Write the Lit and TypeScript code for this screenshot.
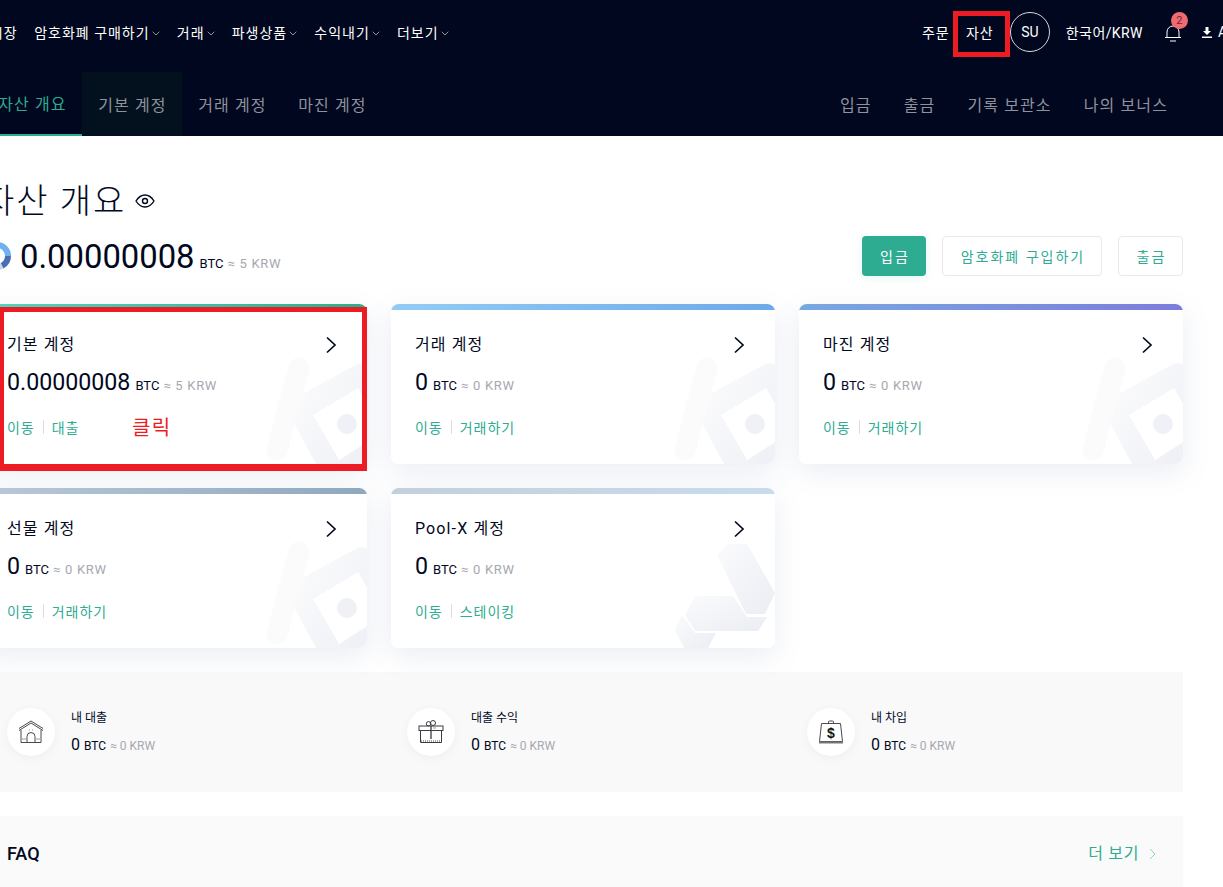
import { LitElement, html, css, svg } from "lit";
import { customElement } from "lit/decorators.js";

const chevDown = html`<svg class="cd" viewBox="0 0 8 5" width="8" height="5"><path d="M.7.7 4 4l3.300-3.300" fill="none" stroke="#8b8e99" stroke-width="1"/></svg>`;
const chevRight = html`<svg class="cr" viewBox="0 0 12 18" width="12" height="18"><path d="M2 1.500 10 9l-8 7.500" fill="none" stroke="#01081e" stroke-width="1.700"/></svg>`;

const kMark = svg`<svg class="wm" viewBox="0 0 384 160" width="384" height="160">
  <defs>
    <linearGradient id="wg" gradientUnits="userSpaceOnUse" x1="305" y1="90" x2="384" y2="140"><stop offset="0" stop-color="#fbfbfc"/><stop offset="1" stop-color="#eff1f6"/></linearGradient>
  </defs>
  <path d="M316 64 294 146" stroke="#fbfbfc" stroke-width="21" stroke-linecap="round" fill="none"/>
  <path d="M321 89 376 59 384 60V160H333L311 119Z" fill="url(#wg)"/>
  <path d="M330 111 375 84 400 128 356 156Z" fill="#fff"/>
  <circle cx="364" cy="120" r="10" fill="#eff1f6"/>
</svg>`;
const poolMark = svg`<svg class="wm" viewBox="0 0 384 160" width="384" height="160">
  <defs><linearGradient id="pg" x1="0" y1="0" x2="1" y2="1"><stop offset="0" stop-color="#fbfbfd"/><stop offset="1" stop-color="#eaedf3"/></linearGradient></defs>
  <path d="M326 67 336 56H356L384 105 374 126H355Z" fill="url(#pg)"/>
  <path d="M294 127 304 108H342L356 129H376L367 143H304Z" fill="url(#pg)"/>
  <path d="M284 142 291 127 304 145H325L317 160H293Z" fill="url(#pg)"/>
</svg>`;

const houseIcon = html`<svg viewBox="0 0 26 24" width="26" height="24" fill="none" stroke="#4a4a4f" stroke-width="1">
  <path d="M1 8.500 13 1 25 8.500"/><path d="M1 10.500 13 3 25 10.500"/><path d="M3 10v12.500h20V10"/>
  <path d="M9 22.500v-6a4 4 0 0 1 8 0v6"/>
  <path d="M11 10h1M14 10h1M4 19h4M18 19h4" stroke="#999"/></svg>`;
const giftIcon = html`<svg viewBox="0 0 26 24" width="26" height="24" fill="none" stroke="#3c3c42" stroke-width="1">
  <rect x="1" y="6" width="24" height="4.500"/><path d="M2.500 10.500V22.500H23.500V10.500"/><path d="M13 6v13" stroke-width="1.300"/>
  <circle cx="10.500" cy="3.800" r="2.200"/><circle cx="15" cy="3" r="2.500"/>
  <path d="M3 21h20" stroke="#888" stroke-dasharray="1 1" stroke-width="1.500"/><path d="M15 8h3" stroke="#999"/></svg>`;
const bagIcon = html`<svg viewBox="0 0 26 25" width="26" height="25" fill="none" stroke="#4a4a4f" stroke-width="1">
  <path d="M10.500 3.500V2a1 1 0 0 1 1-1h3a1 1 0 0 1 1 1v1.500"/><path d="M3.500 3.500h19L24.500 21.500h-23Z"/>
  <path d="M1 22.500h24" stroke="#777" stroke-width="2"/>
  <text x="13" y="17.500" font-family="Liberation Sans" font-size="14" font-weight="700" text-anchor="middle" fill="#111" stroke="none">$</text></svg>`;

const cards = [
  { t: "기본 계정", n: "0.00000008", k: "5", a: "대출", c: "c1", m: kMark },
  { t: "거래 계정", n: "0", k: "0", a: "거래하기", c: "c2", m: kMark },
  { t: "마진 계정", n: "0", k: "0", a: "거래하기", c: "c3", m: kMark },
  { t: "선물 계정", n: "0", k: "0", a: "거래하기", c: "c4", m: kMark },
  { t: "Pool-X 계정", n: "0", k: "0", a: "스테이킹", c: "c5", m: poolMark },
];

@customElement("app-root")
export class AppRoot extends LitElement {
  static styles = css`
    :host { display: block; width: 1223px; height: 887px; overflow: hidden; position: relative; background: #fff;
      font-family: Roboto, "Noto Sans CJK KR", sans-serif; color: #01081e; }
    * { box-sizing: border-box; }
    .ko { letter-spacing: .07em; }
    header { height: 72px; background: #00071e; display: flex; align-items: center; padding-bottom: 8px; color: #fff; font-size: 14px; overflow: hidden; }
    .left { display: flex; align-items: center; margin-left: -10px; flex-shrink: 0; }
    .left .i { display: flex; align-items: center; margin-right: 17.200px; white-space: nowrap; }
    .left .i.first { margin-right: 16.500px; }
    .cd { margin-left: 2px; margin-top: 3px; }
    .right { margin-left: auto; width: 301px; flex-shrink: 0; display: flex; align-items: center; white-space: nowrap; }
    .right .m { margin-right: 16.200px; }
    .right .lang { letter-spacing: .4px; margin-right: 18px; }
    .avatar { width: 40px; height: 40px; flex-shrink: 0; border: 1px solid #d8d9de; border-radius: 50%; display: flex; align-items: center; justify-content: center; margin-right: 16px; font-size: 14px; font-weight: 400; }
    .bell { position: relative; width: 16px; height: 18px; flex-shrink: 0; margin: 2px 21px 0 4px; }
    .badge { position: absolute; left: 6px; top: -12px; width: 17px; height: 17px; border-radius: 50%; background: #ee6b72; color: #7a1e26; font-size: 11px; display: flex; align-items: center; justify-content: center; }
    .dl { display: flex; align-items: center; gap: 6px; }
    .subwrap { height: 64px; background: #00071e; }
    .sub { height: 64px; display: flex; justify-content: space-between; margin-left: -18px; width: 1201px; color: #8f929c; font-size: 16px; }
    .tabs { display: flex; }
    .tab { width: 100px; display: flex; align-items: center; justify-content: center; white-space: nowrap; padding: 0 0 1px 1px; }
    .tab.on { color: #2dac91; border-bottom: 2px solid #2dac91; }
    .tab.hov { background: #03111f; }
    .subr { display: flex; gap: 32px; align-items: center; padding: 0 15px 1px 0; white-space: nowrap; }
    main { margin-left: -17px; width: 1200px; }
    .title { display: flex; align-items: center; height: 40px; margin-top: 45px; font-size: 34px; font-weight: 300; gap: 9px; letter-spacing: 2px; line-height: 40px; white-space: nowrap; }
    .bal { display: flex; align-items: center; justify-content: space-between; margin-top: 15px; height: 40px; }
    .ball { display: flex; align-items: center; gap: 9px; }
    .big { font-size: 32.800px; font-weight: 400; }
    .u { font-size: 13px; margin-left: 5px; letter-spacing: 0; }
    .k { font-size: 13px; color: #a6a8b0; margin-left: 4px; letter-spacing: .7px; }
    .ball .numline { display: flex; align-items: baseline; padding-top: 2px; }
    .btns { display: flex; gap: 16px; }
    .btn { height: 40px; border-radius: 4px; border: 1px solid #e8e9ec; color: #2dac91; font-size: 14px; display: flex; align-items: center; justify-content: center; letter-spacing: 2px; padding-left: 2px; white-space: nowrap; }
    .b1 { width: 64px; background: #2dac91; color: #fff; border: 0; box-shadow: 0 2px 8px rgba(45,172,145,.12); }
    .b2 { width: 160px; }
    .b3 { width: 65px; }
    .grid { display: grid; grid-template-columns: repeat(3, 384px); gap: 24px; margin-top: 28px; }
    .card { height: 160px; border-radius: 8px; background: #fff; position: relative; overflow: hidden; padding: 6px 24px 0; }
    .wrap { border-radius: 8px; box-shadow: 0 8px 28px rgba(95,115,165,.13); }
    .bar { position: absolute; left: 0; right: 0; top: 0; height: 6px; }
    .c1 .bar { background: linear-gradient(90deg, #54d4c0, #2bae8d); }
    .c2 .bar { background: linear-gradient(90deg, #92ccf5, #6ea9e8); }
    .c3 .bar { background: linear-gradient(90deg, #78a8e0, #7c7cdc); }
    .c4 .bar { background: linear-gradient(90deg, #b8c9d8, #8fa8be); }
    .c5 .bar { background: linear-gradient(90deg, #c2d0dc, #c8dcee); }
    .wm { position: absolute; left: 0; top: 0; }
    .ct { position: relative; height: 20px; margin-top: 24px; padding-top: 1px; display: flex; justify-content: space-between; align-items: center; font-size: 16px; line-height: 20px; }
    .ct .cr { margin-right: 6px; }
    .cn { position: relative; display: flex; align-items: baseline; margin-top: 14px; height: 28px; }
    .cn .v { font-size: 23.200px; }
    .acts { position: relative; display: flex; align-items: center; margin-top: 21px; font-size: 14px; color: #2dac91; height: 20px; white-space: nowrap; }
    .sep { width: 1px; height: 14px; background: #dcdde0; margin: 0 8px; }
    .strip { height: 120px; margin-top: 24px; background: #f9f9fa; display: grid; grid-template-columns: repeat(3, 400px); padding: 36px 0 0 24px; width: 1200px; }
    .s { display: flex; gap: 16px; }
    .circ { width: 48px; height: 48px; border-radius: 50%; background: #fff; box-shadow: 0 2px 8px rgba(90,100,130,.07); display: flex; align-items: center; justify-content: center; }
    .sl { font-size: 12px; line-height: 18px; margin-top: 1px; }
    .sn { display: flex; align-items: baseline; margin-top: 8px; }
    .sn .v { font-size: 16px; }
    .sn .u { font-size: 12px; margin-left: 4px; }
    .sn .k { font-size: 12px; letter-spacing: 0; }
    .faq { height: 100px; margin-top: 24px; background: #fafafa; display: flex; align-items: flex-start; justify-content: space-between; padding: 26px 27px 0 24px; }
    .faq b { font-size: 18px; font-weight: 500; line-height: 24px; }
    .more { display: flex; align-items: center; color: #2dac91; font-size: 16px; gap: 10px; line-height: 24px; }
    .more .ko { letter-spacing: .04em; }
    .box { position: absolute; border-style: solid; border-color: #ed1c24; }
    .b-a { left: -1px; top: 307px; width: 368px; height: 164px; border-width: 5px 5px 7px 5px; }
    .b-b { left: 953px; top: 11px; width: 57px; height: 46px; border-width: 5px; }
    .click { position: absolute; left: 132px; top: 414px; color: #ed1c24; font-size: 20px; line-height: 28px; }
  `;

  render() {
    return html`
      <header>
        <div class="left">
          <span class="i first ko">시장</span>
          <span class="i"><span class="ko">암호화폐 구매하기</span>${chevDown}</span>
          <span class="i"><span class="ko">거래</span>${chevDown}</span>
          <span class="i"><span class="ko">파생상품</span>${chevDown}</span>
          <span class="i"><span class="ko">수익내기</span>${chevDown}</span>
          <span class="i"><span class="ko">더보기</span>${chevDown}</span>
        </div>
        <div class="right">
          <span class="m ko">주문</span>
          <span class="m ko">자산</span>
          <span class="avatar">SU</span>
          <span class="lang">한국어/KRW</span>
          <span class="bell">
            <svg viewBox="0 0 16 18" width="16" height="18" fill="none" stroke="#fff" stroke-width="1"><path d="M2 13.500V8a6 6 0 0 1 12 0v5.500M0 13.500h16M5 17h6"/></svg>
            <span class="badge">2</span>
          </span>
          <span class="dl">
            <svg viewBox="0 0 10 11" width="10" height="11" fill="#fff"><path d="M3.500 0h3v4H9L5 8 1 4h2.500ZM0 9.500h10V11H0Z"/></svg>
            <span>APP</span>
          </span>
        </div>
      </header>
      <div class="subwrap"><nav class="sub">
        <div class="tabs">
          <span class="tab on ko">자산 개요</span>
          <span class="tab hov ko">기본 계정</span>
          <span class="tab ko">거래 계정</span>
          <span class="tab ko">마진 계정</span>
        </div>
        <div class="subr">
          <span class="ko">입금</span><span class="ko">출금</span><span class="ko">기록 보관소</span><span class="ko">나의 보너스</span>
        </div>
      </nav></div>
      <main>
        <div class="title"><span>자산 개요</span>
          <svg viewBox="0 0 20 14" width="20" height="14" fill="none" stroke="#01081e" stroke-width="1.400"><path d="M1 7c2.500-4 5.500-6 9-6s6.500 2 9 6c-2.500 4-5.500 6-9 6s-6.500-2-9-6Z"/><circle cx="10" cy="7" r="2.500"/></svg>
        </div>
        <div class="bal">
          <div class="ball">
            <svg viewBox="0 0 28 28" width="28" height="28" fill="none" stroke-width="6">
              <path d="M14 3a11 11 0 0 1 11 11" stroke="#6fb0ee"/>
              <path d="M25 14a11 11 0 0 1-6 9.800" stroke="#4a6db5"/>
              <path d="M19 23.800A11 11 0 0 1 3 14" stroke="#c5d9ee"/>
              <path d="M3 14A11 11 0 0 1 14 3" stroke="#6fb0ee"/>
            </svg>
            <div class="numline"><span class="big">0.00000008</span><span class="u">BTC</span><span class="k">≈ 5 KRW</span></div>
          </div>
          <div class="btns">
            <span class="btn b1">입금</span><span class="btn b2">암호화폐 구입하기</span><span class="btn b3">출금</span>
          </div>
        </div>
        <div class="grid">
          ${cards.map((c) => html`
            <div class="wrap"><div class="card ${c.c}">
              <div class="bar"></div>${c.m}
              <div class="ct"><span class="ko">${c.t}</span>${chevRight}</div>
              <div class="cn"><span class="v">${c.n}</span><span class="u">BTC</span><span class="k">≈ ${c.k} KRW</span></div>
              <div class="acts"><span class="ko">이동</span><span class="sep"></span><span class="ko">${c.a}</span></div>
            </div></div>`)}
        </div>
        <div class="strip">
          ${[["내 대출", houseIcon], ["대출 수익", giftIcon], ["내 차입", bagIcon]].map(([l, i]) => html`
            <div class="s"><span class="circ">${i}</span>
              <div><div class="sl">${l}</div>
              <div class="sn"><span class="v">0</span><span class="u">BTC</span><span class="k">≈ 0 KRW</span></div></div>
            </div>`)}
        </div>
        <div class="faq"><b>FAQ</b>
          <span class="more"><span class="ko">더 보기</span><svg viewBox="0 0 7 12" width="7" height="12" fill="none" stroke="#8fd6c4" stroke-width="1"><path d="M1 1l5 5-5 5"/></svg></span>
        </div>
      </main>
      <div class="box b-a"></div>
      <div class="box b-b"></div>
      <span class="click ko">클릭</span>
    `;
  }
}
